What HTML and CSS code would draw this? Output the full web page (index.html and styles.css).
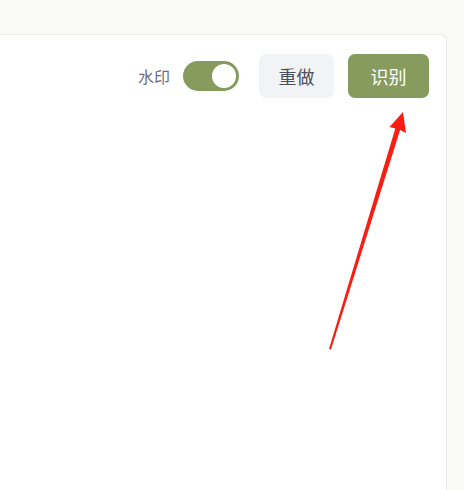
FILE: index.html
```html
<!DOCTYPE html>
<html lang="zh-CN">
<head>
  <meta charset="UTF-8">
  <meta name="viewport" content="width=device-width, initial-scale=1.0">
  <link rel="stylesheet" href="styles.css">
  <title>识别</title>
</head>
<body>

  <div class="page">
    <div class="panel">
      <div class="toolbar">
        <label class="watermark">
          <span>水印</span>
          <span class="switch on"><span class="knob"></span></span>
        </label>
        <button class="btn btn-redo">重做</button>
        <button class="btn btn-recognize">识别</button>
      </div>
    </div>
  </div>

  <!-- annotation arrow drawn over the screenshot -->
  <svg class="arrow" width="464" height="490" viewBox="0 0 464 490">
    <polygon fill="#fa1d12" points="329,349 395.3,128.5 389.5,127 403,112 406,133 400.1,130 331,349.5"/>
  </svg>

</body>
</html>
```

FILE: styles.css
```css
body {
  font-family: "Noto Sans CJK SC", "Noto Sans", sans-serif;
  background-color: #f9f9f5;
  margin: 0;
  padding: 0;
  overflow: hidden;
}

.page {
  height: 490px;
  padding: 34px 17px 0 0;
  box-sizing: border-box;
}

.panel {
  margin-left: -10px;
  height: 100%;
  background-color: #fff;
  border: 1px solid #ececea;
  border-bottom: none;
  border-radius: 8px 8px 0 0;
}

.toolbar {
  display: flex;
  justify-content: flex-end;
  align-items: center;
  padding: 19px 17px 0 0;
}

.watermark {
  display: flex;
  align-items: center;
  gap: 13px;
  font-size: 16px;
  color: #6b6f7a;
  margin-right: 20px;
}

.switch {
  width: 56px;
  height: 30px;
  border-radius: 15px;
  background-color: #879b5f;
  position: relative;
}

.switch .knob {
  position: absolute;
  top: 3px;
  right: 3px;
  width: 24px;
  height: 24px;
  border-radius: 50%;
  background-color: #fff;
}

.btn {
  height: 44px;
  border: none;
  border-radius: 7px;
  font-family: inherit;
  font-size: 18px;
  cursor: pointer;
}

.btn-redo {
  width: 75px;
  background-color: #f2f3f5;
  color: #4a4f5c;
  margin-right: 14px;
}

.btn-recognize {
  width: 81px;
  background-color: #879b5f;
  color: #fff;
}

.arrow {
  position: absolute;
  top: 0;
  left: 0;
  pointer-events: none;
}
```
